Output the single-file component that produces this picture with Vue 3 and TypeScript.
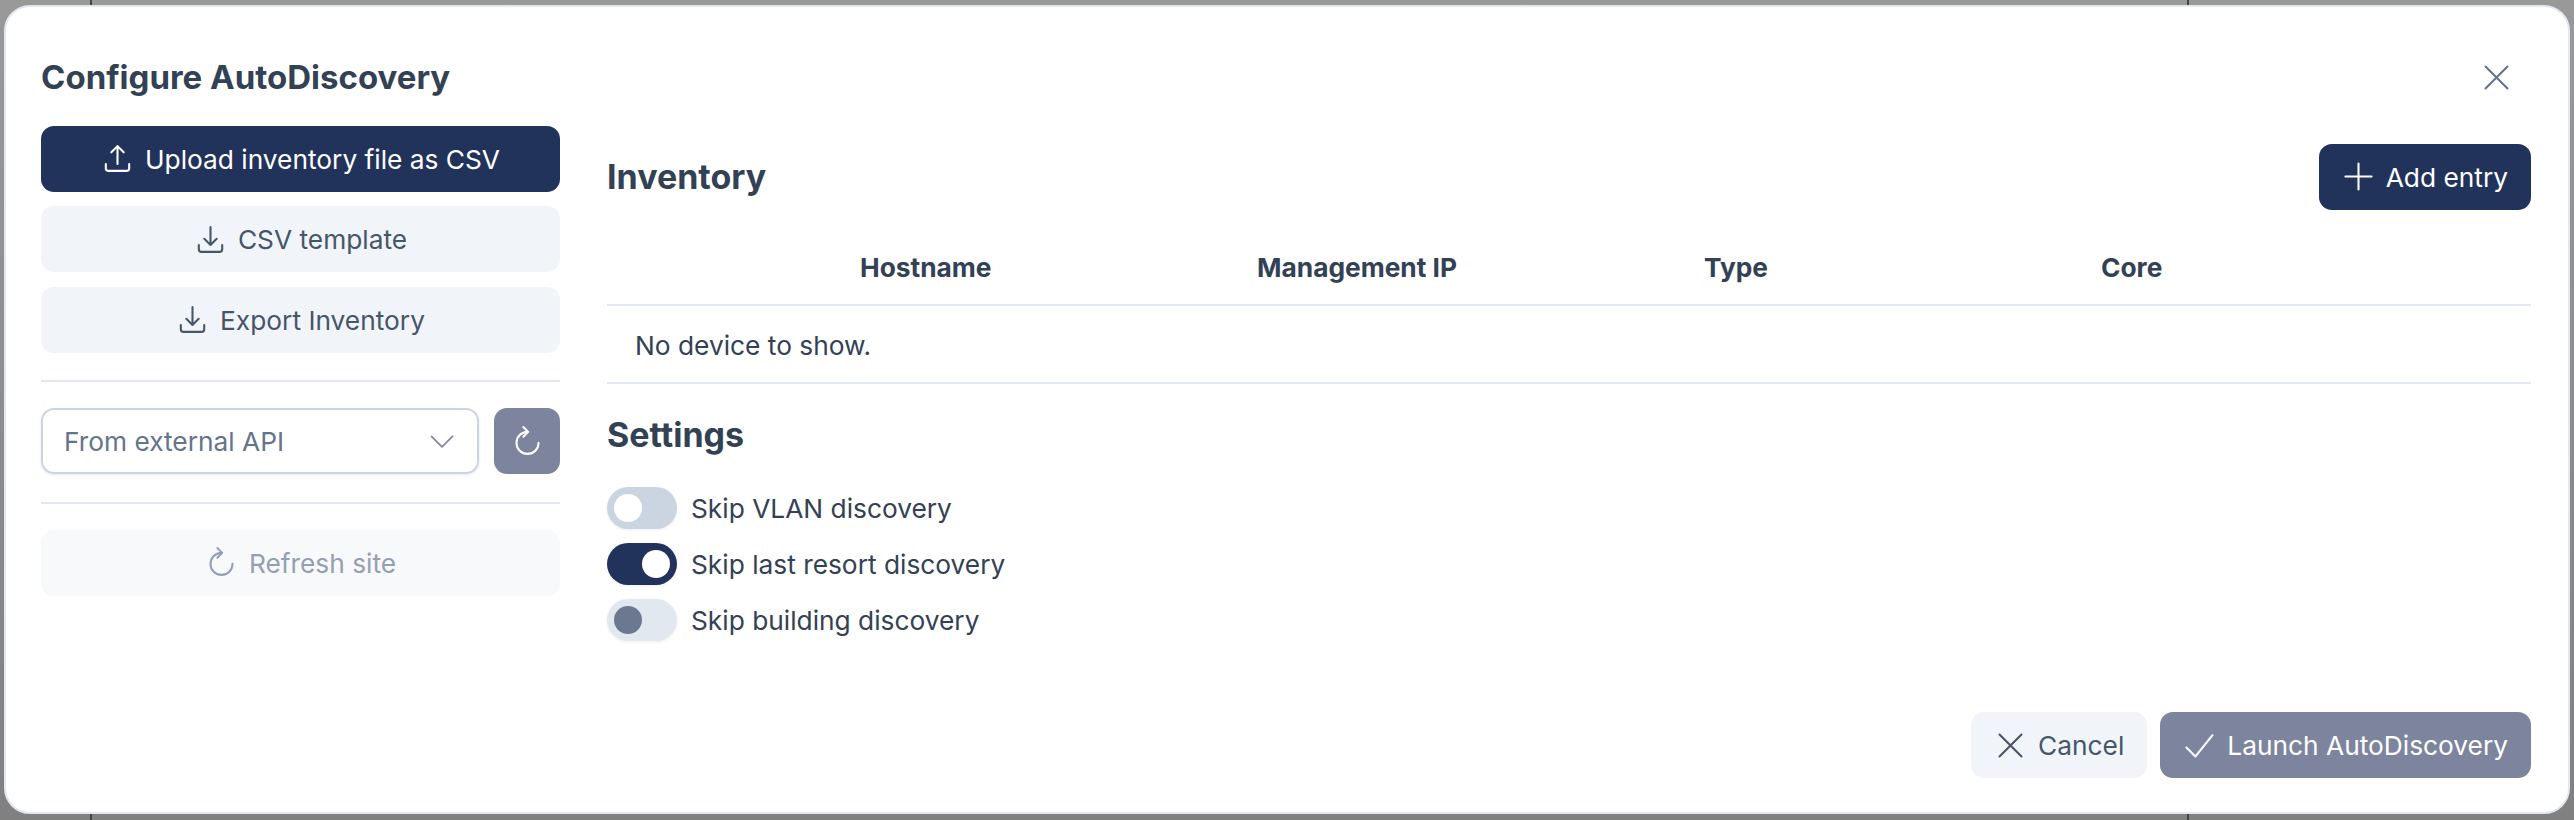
<template>
  <div class="backdrop">
    <span class="tick tick-left"></span>
    <span class="tick tick-right"></span>
    <div class="modal">
      <header class="modal-header">
        <h2>Configure AutoDiscovery</h2>
        <button class="close-btn" aria-label="Close">
          <svg viewBox="0 0 24 24" class="icon"><path d="M4 4l16 16M20 4L4 20" /></svg>
        </button>
      </header>

      <div class="modal-body">
        <aside class="side">
          <button class="btn btn-primary">
            <svg viewBox="0 0 24 24" class="icon"><path d="M3.500 16v3a2 2 0 0 0 2 2h13a2 2 0 0 0 2-2v-3M12 16V3M7.500 7.500L12 3l4.500 4.500" /></svg>
            <span>Upload inventory file as CSV</span>
          </button>
          <button class="btn btn-soft">
            <svg viewBox="0 0 24 24" class="icon"><path d="M3.500 16v3a2 2 0 0 0 2 2h13a2 2 0 0 0 2-2v-3M12 3v13M7.500 11.500L12 16l4.500-4.500" /></svg>
            <span>CSV template</span>
          </button>
          <button class="btn btn-soft">
            <svg viewBox="0 0 24 24" class="icon"><path d="M3.500 16v3a2 2 0 0 0 2 2h13a2 2 0 0 0 2-2v-3M12 3v13M7.500 11.500L12 16l4.500-4.500" /></svg>
            <span>Export Inventory</span>
          </button>

          <hr class="rule rule-first" />

          <div class="source">
            <div class="select">
              <span>From external API</span>
              <svg viewBox="0 0 24 24" class="icon chevron"><path d="M3 8l9 9 9-9" /></svg>
            </div>
            <button class="btn btn-muted square">
              <svg viewBox="0 0 24 24" class="icon"><path d="M12 5a8 8 0 1 0 8 8M9 1.500L12.500 5 9 8.500" /></svg>
            </button>
          </div>

          <hr class="rule rule-second" />

          <button class="btn btn-disabled">
            <svg viewBox="0 0 24 24" class="icon"><path d="M12 5a8 8 0 1 0 8 8M9 1.500L12.500 5 9 8.500" /></svg>
            <span>Refresh site</span>
          </button>
        </aside>

        <main class="content">
          <div class="inventory-head">
            <h3>Inventory</h3>
            <button class="btn btn-primary add-btn">
              <svg viewBox="0 0 24 24" class="icon"><path d="M12 2.500v19M2.500 12h19" /></svg>
              <span>Add entry</span>
            </button>
          </div>

          <div class="table-head">
            <span v-for="col in columns" :key="col">{{ col }}</span>
          </div>
          <div class="table-empty">No device to show.</div>

          <h3 class="settings-title">Settings</h3>
          <div class="settings">
            <label v-for="opt in options" :key="opt.label" class="toggle-row">
              <span class="toggle" :class="opt.state"><span class="knob"></span></span>
              <span class="toggle-label">{{ opt.label }}</span>
            </label>
          </div>
        </main>
      </div>

      <footer class="modal-footer">
        <button class="btn btn-soft foot-btn">
          <svg viewBox="0 0 24 24" class="icon"><path d="M4 4l16 16M20 4L4 20" /></svg>
          <span>Cancel</span>
        </button>
        <button class="btn btn-muted foot-btn">
          <svg viewBox="0 0 24 24" class="icon"><path d="M2.500 13.500L9 20 21.500 4.500" /></svg>
          <span>Launch AutoDiscovery</span>
        </button>
      </footer>
    </div>
  </div>
</template>

<script setup lang="ts">
interface ToggleOption {
  label: string
  state: 'off' | 'on' | 'partial'
}

const columns: string[] = ['Hostname', 'Management IP', 'Type', 'Core']

const options: ToggleOption[] = [
  { label: 'Skip VLAN discovery', state: 'off' },
  { label: 'Skip last resort discovery', state: 'on' },
  { label: 'Skip building discovery', state: 'partial' }
]
</script>

<style>
body {
  background: #8d8d8d;
}
</style>

<style scoped>
.backdrop {
  position: relative;
  width: 2574px;
  height: 820px;
  box-sizing: border-box;
  padding: 5px 4px 6px;
  overflow: hidden;
  background: linear-gradient(#999999, #808080);
  font-family: Inter, 'Noto Sans', sans-serif;
  font-size: 26.3px;
  color: #334155;
}

.tick {
  position: absolute;
  top: 0;
  bottom: 0;
  width: 2px;
  background: #444;
}
.tick-left { left: 90px; }
.tick-right { left: 2187px; }

.modal {
  position: relative;
  height: 100%;
  box-sizing: border-box;
  display: flex;
  flex-direction: column;
  padding: 0 37px 34px 35px;
  background: #fff;
  border: 2px solid #e2e8f0;
  border-radius: 26px;
}

.modal-header {
  display: flex;
  justify-content: space-between;
  align-items: center;
  height: 40px;
  margin: 50px 0 29px;
}
.modal-header h2 {
  margin: 0;
  font-size: 33px;
  font-weight: 700;
  color: #334155;
}

.close-btn {
  display: flex;
  padding: 0;
  margin-right: 18px;
  border: 0;
  background: none;
  color: #64748b;
}

.icon {
  flex: none;
  width: 33px;
  height: 33px;
  fill: none;
  stroke: currentColor;
  stroke-width: 1.5;
  stroke-linecap: round;
  stroke-linejoin: round;
}

.modal-body {
  flex: 1;
  display: grid;
  grid-template-columns: 519px 1fr;
  column-gap: 47px;
}

.side {
  display: flex;
  flex-direction: column;
}

.btn {
  display: flex;
  align-items: center;
  justify-content: center;
  gap: 11px;
  height: 65.7px;
  padding: 0;
  border: 0;
  border-radius: 13px;
  font-family: inherit;
  font-size: 26.3px;
}
.btn span {
  padding-top: 1px;
}
.btn-primary {
  background: #22335b;
  color: #fff;
}
.btn-soft {
  background: #f1f5f9;
  color: #475569;
}
.btn-muted {
  background: #7c859d;
  color: #fff;
}
.btn-disabled {
  background: #f8f9fb;
  color: #94a0b1;
}
.side .btn + .btn {
  margin-top: 14.8px;
}

.rule {
  width: 100%;
  height: 2px;
  margin: 0;
  border: 0;
  background: #e2e8f0;
}
.rule-first {
  margin: 27px 0 26.500px;
}
.rule-second {
  margin: 28px 0 26px;
}

.source {
  display: flex;
  gap: 15px;
}
.select {
  flex: 1;
  display: flex;
  align-items: center;
  justify-content: space-between;
  box-sizing: border-box;
  height: 65.7px;
  padding: 0 21px;
  border: 2px solid #cbd5e1;
  border-radius: 13px;
  box-shadow: 0 1px 3px rgba(15, 23, 42, 0.1);
  color: #64748b;
}
.chevron {
  width: 28px;
  height: 28px;
  color: #7f8ca0;
}
.square {
  flex: none;
  width: 66px;
}

.inventory-head {
  display: flex;
  justify-content: space-between;
  align-items: center;
  margin-top: 18px;
}
h3 {
  margin: 0;
  font-size: 34px;
  line-height: 40px;
  font-weight: 700;
  color: #334155;
}

.add-btn {
  padding: 0 23px;
}

.table-head {
  display: grid;
  grid-template-columns: 397px 447px 397px 1fr;
  align-items: center;
  height: 76px;
  margin-top: 20px;
  padding: 1px 0 0 253px;
  border-bottom: 2px solid #e2e8f0;
  box-sizing: border-box;
  font-weight: 700;
}

.table-empty {
  display: flex;
  align-items: center;
  box-sizing: border-box;
  height: 78px;
  padding: 3px 0 0 28px;
  border-bottom: 2px solid #e2e8f0;
}

.settings-title {
  margin-top: 31px;
}

.settings {
  display: flex;
  flex-direction: column;
  gap: 14px;
  margin-top: 32px;
}
.toggle-row {
  display: flex;
  align-items: center;
  gap: 14px;
  height: 42px;
}
.toggle-label {
  padding-top: 1px;
}
.toggle {
  display: flex;
  align-items: center;
  box-sizing: border-box;
  width: 70px;
  height: 42px;
  padding: 7px;
  border-radius: 21px;
  box-shadow: 0 1px 3px rgba(15, 23, 42, 0.08);
}
.toggle.off { background: #cbd5e1; }
.toggle.on {
  justify-content: flex-end;
  background: #22335b;
}
.toggle.partial { background: #e2e8f0; }
.knob {
  width: 28px;
  height: 28px;
  border-radius: 50%;
  background: #fff;
}
.toggle.partial .knob { background: #6b7890; }

.modal-footer {
  display: flex;
  justify-content: flex-end;
  gap: 13px;
}
.foot-btn {
  padding: 0 23px;
}
</style>
